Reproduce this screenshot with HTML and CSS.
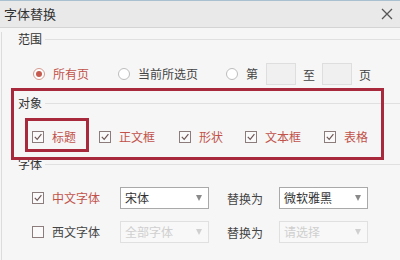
FILE: index.html
```html
<!DOCTYPE html>
<html lang="zh">
<head>
<meta charset="utf-8">
<link rel="stylesheet" href="styles.css">
</head>
<body>
<div class="dialog">
  <div class="titlebar">
    <span class="title">字体替换</span>
    <svg class="close" width="12" height="12" viewBox="0 0 12 12"><path d="M1 1L11 11M11 1L1 11" stroke="#555" stroke-width="1.3" fill="none"/></svg>
  </div>
  <div class="content">
    <div class="legend lg-range"><span>范围</span><i></i></div>
    <div class="row radios">
      <label class="opt on"><span class="radio checked"></span>所有页</label>
      <label class="opt opt2"><span class="radio"></span>当前所选页</label>
      <label class="opt opt3"><span class="radio"></span>第</label>
      <span class="pagebox b1"></span><span class="sep">至</span><span class="pagebox"></span><span class="sep">页</span>
    </div>

    <div class="legend lg-obj"><span>对象</span><i></i></div>
    <div class="row checks">
      <label class="opt on"><span class="cb"><svg width="10" height="10" viewBox="0 0 10 10"><path d="M1.8 4.8L4.2 7.3L8.4 2.2" stroke="#6d5555" stroke-width="1.2" fill="none"/></svg></span>标题</label>
      <label class="opt on c2"><span class="cb"><svg width="10" height="10" viewBox="0 0 10 10"><path d="M1.8 4.8L4.2 7.3L8.4 2.2" stroke="#6d5555" stroke-width="1.2" fill="none"/></svg></span>正文框</label>
      <label class="opt on c3"><span class="cb"><svg width="10" height="10" viewBox="0 0 10 10"><path d="M1.8 4.8L4.2 7.3L8.4 2.2" stroke="#6d5555" stroke-width="1.2" fill="none"/></svg></span>形状</label>
      <label class="opt on c4"><span class="cb"><svg width="10" height="10" viewBox="0 0 10 10"><path d="M1.8 4.8L4.2 7.3L8.4 2.2" stroke="#6d5555" stroke-width="1.2" fill="none"/></svg></span>文本框</label>
      <label class="opt on c5"><span class="cb"><svg width="10" height="10" viewBox="0 0 10 10"><path d="M1.8 4.8L4.2 7.3L8.4 2.2" stroke="#6d5555" stroke-width="1.2" fill="none"/></svg></span>表格</label>
    </div>

    <div class="legend lg-font"><span>字体</span><i></i></div>
    <div class="row fontrow r1">
      <label class="opt on"><span class="cb"><svg width="10" height="10" viewBox="0 0 10 10"><path d="M1.8 4.8L4.2 7.3L8.4 2.2" stroke="#6d5555" stroke-width="1.2" fill="none"/></svg></span>中文字体</label>
      <div class="select s1"><span>宋体</span><b></b></div>
      <span class="rep">替换为</span>
      <div class="select s2"><span>微软雅黑</span><b></b></div>
    </div>
    <div class="row fontrow r2">
      <label class="opt"><span class="cb"></span>西文字体</label>
      <div class="select s1 disabled"><span>全部字体</span><b></b></div>
      <span class="rep">替换为</span>
      <div class="select s2 disabled"><span>请选择</span><b></b></div>
    </div>
  </div>
  <div class="mark mark-outer"></div>
  <div class="mark mark-inner"></div>
</div>
</body>
</html>
```
FILE: styles.css
```css
* { box-sizing: border-box; }
html, body { margin: 0; padding: 0; }
body {
  width: 400px;
  height: 260px;
  overflow: hidden;
  background: #f6f6f6;
  font-family: "Noto Sans CJK SC", "Microsoft YaHei", sans-serif;
  font-size: 12px;
  color: #404040;
}
.dialog {
  position: relative;
  width: 400px;
  height: 260px;
  border-top: 1px solid #a9c0d0;
}
.titlebar {
  height: 27px;
  background: #e9e9e9;
  border-bottom: 1px solid #d4d4d4;
  display: flex;
  align-items: center;
  justify-content: space-between;
  padding: 0 7px 0 4px;
}
.title {
  font-size: 13px;
  color: #333;
  line-height: 16px;
}
.close { display: block; margin-bottom: 1px; }
.content {
  margin-left: 1px;
  border-left: 1px solid #dcdcdc;
  height: 232px;
}
.legend {
  display: flex;
  align-items: center;
  height: 14px;
  padding-left: 16px;
  color: #333;
  line-height: 14px;
}
.legend i {
  flex: 1;
  height: 1px;
  background: #e0e0e0;
  margin-left: 3px;
}
.lg-range { margin-top: 4px; }
.lg-obj { margin-top: 11px; }
.lg-font { margin-top: 9px; }
.row {
  display: flex;
  align-items: center;
  height: 22px;
}
.radios { margin-top: 17px; padding-left: 31px; }
.checks { margin-top: 16px; padding-left: 30px; }
.fontrow { padding-left: 30px; }
.r1 { margin-top: 16px; }
.r2 { margin-top: 12px; }
.opt {
  display: flex;
  align-items: center;
  gap: 8px;
  line-height: 14px;
  color: #444;
}
.opt.on { color: #c1524a; }
.opt2 { margin-left: 29px; }
.opt3 { margin-left: 28px; }
.radio {
  width: 12px;
  height: 12px;
  border-radius: 50%;
  border: 1px solid #bdbdbd;
  background: #fff;
  display: flex;
  align-items: center;
  justify-content: center;
}
.radio.checked { border-color: #d49a90; }
.radio.checked::after {
  content: "";
  width: 6px;
  height: 6px;
  border-radius: 50%;
  background: #c65a4f;
}
.pagebox {
  width: 30px;
  height: 22px;
  border: 1px solid #dedede;
  background: #f0f0f0;
  margin-left: 8px;
}
.sep { margin-left: 7px; color: #444; }
.sep + .pagebox { margin-left: 7px; }
.cb {
  width: 12px;
  height: 12px;
  border: 1px solid #8c7c7c;
  background: #fafafa;
  display: flex;
  align-items: center;
  justify-content: center;
}
.cb svg { display: block; }
.c2 { margin-left: 23px; }
.c3 { margin-left: 24px; }
.c4 { margin-left: 22px; }
.c5 { margin-left: 23px; }
.select {
  width: 89px;
  height: 22px;
  border: 1px solid #a9a9a9;
  background: #fff;
  display: flex;
  align-items: center;
  justify-content: space-between;
  padding: 0 6px 0 4px;
  color: #333;
  line-height: 14px;
}
.select b {
  width: 0;
  height: 0;
  border-left: 3.5px solid transparent;
  border-right: 3.5px solid transparent;
  border-top: 6px solid #8a8a8a;
}
.select.disabled {
  border-color: #e0e0e0;
  background: #f8f8f8;
  color: #cfcfcf;
}
.select.disabled b { border-top-color: #d0d0d0; }
.s1 { margin-left: 20px; }
.s2 { margin-left: 16px; }
.rep { margin-left: 18px; color: #444; }
.mark {
  position: absolute;
  border: 3px solid #a8283c;
}
.mark-outer {
  left: 11px;
  top: 87px;
  width: 373px;
  height: 72px;
}
.mark-inner {
  left: 25px;
  top: 117px;
  width: 64px;
  height: 34px;
}
```
